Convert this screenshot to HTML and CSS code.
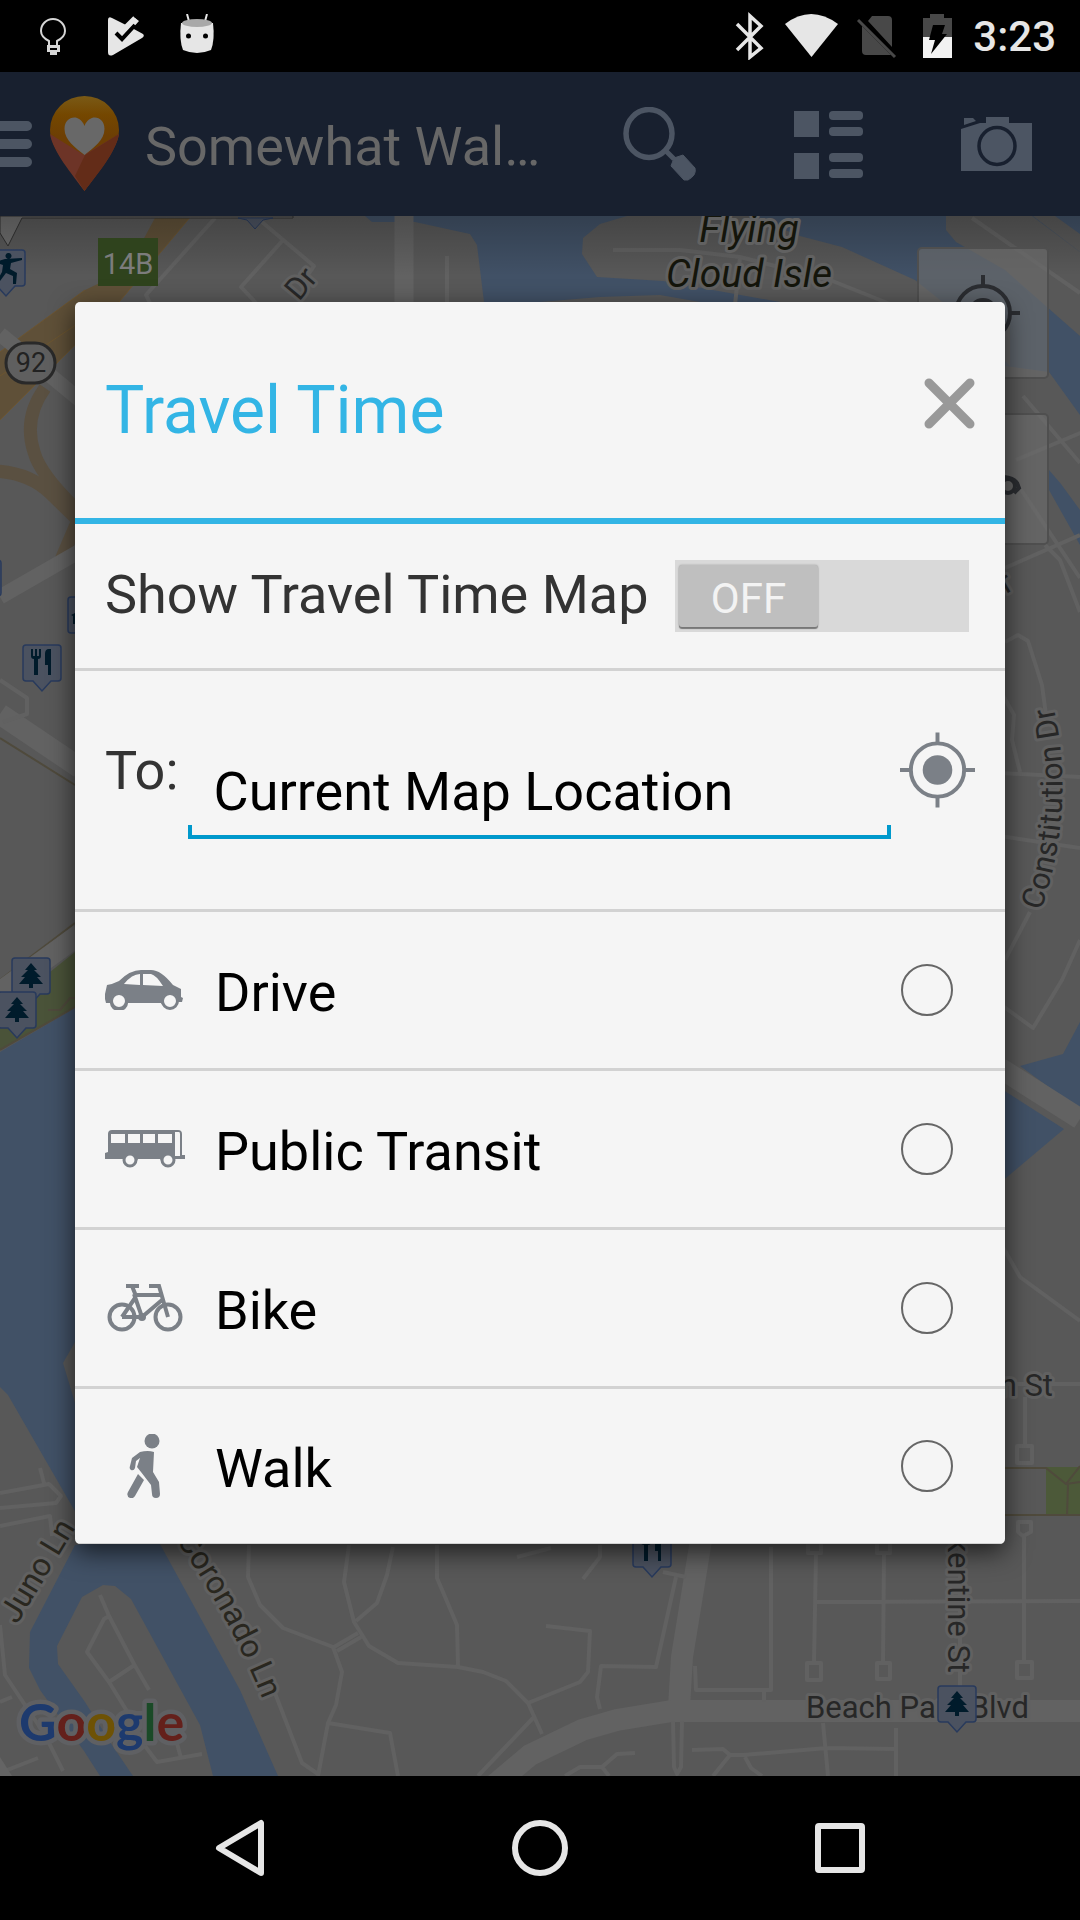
FILE: index.html
```html
<!DOCTYPE html>
<html lang="en">
<head>
<meta charset="utf-8">
<meta name="viewport" content="width=device-width, initial-scale=1">
<title>Travel Time</title>
<link rel="stylesheet" href="styles.css">
</head>
<body>
<header class="status">
  <div class="status-group status-left">
    <svg width="42" height="44" viewBox="32 14 42 44" aria-hidden="true"><path d="M49 45v-5c-6-3-8-6-8-10a12 12 0 0 1 24 0c0 4-2 7-8 10v5z" transform="translate(0 1)" fill="none" stroke="#d6d6d6" stroke-width="2"/><path d="M47 45h13v7h-3v3h-7v-3h-3zM50 48v2h7v-2z" fill="#d6d6d6" fill-rule="evenodd"/></svg>
    <svg width="42" height="44" viewBox="105 14 42 44" aria-hidden="true"><path d="M109 20q0-4 4-2l16 8 7-8 4 3-17 19-7-7 2-2 5 4 10-7 11 6q2 2-1 4l-29 17q-5 2-5-3z" fill="#e6e6e6"/><path d="M117 33l6 6 13-14" fill="none" stroke="#000" stroke-width="4"/><path d="M126 28l10-10" stroke="#e6e6e6" stroke-width="5"/></svg>
    <svg width="42" height="44" viewBox="177 14 42 44" aria-hidden="true"><path d="M188 14l3 11M208 14l-3 11" stroke="#e6e6e6" stroke-width="2"/><path d="M182 23q-2 17 2 27 14 6 28 0 4-10 2-27z" fill="#e6e6e6"/><ellipse cx="198" cy="23" rx="15" ry="4" fill="#a9a9a9"/><circle cx="189.500" cy="36" r="2.500" fill="#000"/><circle cx="206.500" cy="36" r="2.500" fill="#000"/></svg>
  </div>
  <div class="status-group">
    <svg width="220" height="48" viewBox="735 12 220 48" aria-hidden="true"><path d="M737 24l24 24-11 9V16l11 10-24 24" fill="none" stroke="#e6e6e6" stroke-width="3.500"/><path d="M785 24q26-20 53 0l-26.500 33z" fill="#e6e6e6"/><path d="M868 21l4-5h16q4 0 4 4v27zM862 26l29 29h-25q-4 0-4-4z" fill="#484848"/><path d="M858 20l37 37" stroke="#484848" stroke-width="3"/><path d="M923 37V18h7v-4h14v4h8v19z" fill="#484848"/><path d="M923 37h29v21h-29z" fill="#f2f2f2"/><path d="M933 25h12l-3 9h5l-16 20 4-14h-6z" fill="#000"/></svg>
    <time class="clock">3:23</time>
  </div>
</header>

<div class="stage">
  <header class="appbar">
    <button class="icon-button" type="button" aria-label="Menu"><svg width="32" height="46" viewBox="0 121 32 46"><path d="M0 126h27M0 144h27M0 162h27" stroke="#4c5563" stroke-width="10" stroke-linecap="round"/></svg></button>
    <svg class="brand" width="70" height="96" viewBox="50 96 70 96" aria-hidden="true">
      <defs><linearGradient id="pin" x1="0" y1="0" x2="0" y2="1"><stop offset="0" stop-color="#7a5a16"/><stop offset=".2" stop-color="#744700"/><stop offset=".42" stop-color="#6d3f04"/></linearGradient></defs>
      <path d="M84.500 191C72 172 50 148 50 130a34.500 34 0 0 1 69 0c0 18-22 42-34.500 61z" fill="url(#pin)"/>
      <path d="M50 134l34 21 35-21c-3 18-22 40-34.500 57C72 174 53 152 50 134z" fill="#6d3427"/><path d="M119 134l-34 21-10 21 9.500 15c13-17 31-38 34.500-57z" fill="#632c18"/>
      <path d="M84.500 155c-9-7-20-15-20-26 0-13 15-16 20-3 5-13 20-10 20 3 0 11-11 19-20 26z" fill="#686868"/>
    </svg>
    <h1 class="title">Somewhat Wal…</h1>
    <button class="action" type="button" aria-label="Search"><svg width="74" height="74" viewBox="624 107 74 74"><ellipse cx="650" cy="133.500" rx="23" ry="24" fill="none" stroke="#4c5563" stroke-width="5.500"/><path d="M667 151l8 8" stroke="#4c5563" stroke-width="5"/><path d="M675 158l9-3 12 13q2 7-7 12h-4l-13-14z" fill="#4c5563" stroke="#4c5563" stroke-linejoin="round"/></svg></button>
    <button class="action" type="button" aria-label="List view"><svg width="72" height="72" viewBox="792 108 72 72" fill="#4c5563"><path d="M794 111h25v26h-25zM794 153h25v26h-25z"/><rect x="829" y="111" width="34" height="9" rx="4"/><rect x="829" y="127" width="34" height="9" rx="4"/><rect x="829" y="153" width="34" height="9" rx="4"/><rect x="829" y="169" width="34" height="9" rx="4"/></svg></button>
    <button class="action" type="button" aria-label="Camera"><svg width="72" height="72" viewBox="960 108 72 72"><path d="M961 129l19-6h6v-6h23v6h23v48h-71zM964 125v-7h9l3 3z" fill="#4c5563"/><ellipse cx="997" cy="146" rx="18" ry="18.500" fill="#4c5563" stroke="#18202f" stroke-width="3.500"/></svg></button>
  </header>

  <main class="map">
    <svg class="map-art" viewBox="0 216 1080 1560" preserveAspectRatio="xMidYMid slice" role="img" aria-label="Map">
      <defs>
        <linearGradient id="edge" x1="0" y1="0" x2="0" y2="1"><stop offset="0" stop-opacity=".22"/><stop offset="1" stop-opacity="0"/></linearGradient>
        <g id="marker"><path d="M-16-47h32q3 0 3 3v30q0 3-3 3h-7L0-1-9-11h-7q-3 0-3-3v-30q0-3 3-3z" fill="#4b5260" stroke="#283a5c" stroke-width="1.500"/></g>
        <path id="tree" d="M0-42l6 7h-3l7 7h-4l6 7H2v4h-4v-4h-10l6-7h-4l7-7h-3z" fill="#001b2b"/>
        <path id="fork" d="M-11-43v7q0 3 3 3v16h4v-16q3 0 3-3v-7h-2v7h-2v-7h-2v7h-2v-7zM3-17V-38q0-5 4-5h2v26H6v-10H3z" fill="#001b2b"/>
        <path id="constitution" d="M1041 911Q1078 805 1051 695"/>
        <path id="coronado" d="M176 1540Q232 1620 266 1708"/>
      </defs>
      <rect y="216" width="1080" height="1560" fill="#585858"/>
      <g fill="#415166">
        <path d="M365 216l7 6h43l55 12 7 11 8 65h520V366l44 6 31 43V252l-47-36z"/>
        <path d="M1055 216h25v18zM1049 470l12 14 19 26v35l-31-55z"/>
        <path d="M1020 1066l43-12 17-32v88zM1000 1088l64 41-64 54zM0 1052l80-47v515L8 1395l-8-8z"/>
        <path d="M75 1545l-45 87-1 36 11 22 44 61 16 25h33l-21-31-27-43-27-38-1-18 25-49 21-12 12 1 16 13 69 126 13 51h65l-38-86-85-155z"/>
      </g>
      <g fill="#585858">
        <path d="M627 216l-27 8-17 14-1 16 15 23 66 4 117 21 60 20h170v44l-50-50-45-36-73-33-42-11-50-20z"/>
        <path d="M946 216v14l10 12 49 28 75 66v-84l-48-36zM75 1342l-12 21 12 40zM540 302l60-5 60-2 40 7z"/>
      </g>
      <path d="M0 1012l75-60v55l-75 43z" fill="#4a5339"/>
      <path d="M1046 1467h34v49h-34z" fill="#4c5939"/>
      <g fill="none" stroke="#4f4a3c" stroke-width="2"><path d="M0 738l75 47M0 1050l75-43M0 980l75-57M48 1010h12l10-12h10M1000 1468h46l20 16 14-2M1000 1515h80M1068 1484l-1 32M1066 1484l14-18"/></g>
      <g fill="none" stroke="#5a5041" stroke-width="13"><path d="M45 388q-22 30-11 64 6 22 41 56M-5 471q35 2 55 22l28 27-18 42"/></g>
      <path d="M0 352l85-62 42-20 29-54h35l-72 86-44 43-75 75z" fill="#5f5038"/>
      <path d="M0 376l80-54M85 290l-85 62M0 420l75-75 44-43 72-86" fill="none" stroke="#6c5530" stroke-width="1"/>
      <g fill="none" stroke="#626262">
        <path d="M0 334l80 66M0 597l80-46" stroke-width="15"/><path d="M0 714l80 54M0 992l80-58M1000 1068l80 51" stroke-width="21"/>
        <path d="M404 216v100" stroke-width="19"/>
        <path d="M701 1540l-19 117-3 50" stroke-width="22"/>
        <path d="M485 1793l45-38 52-25 35-10 55-9h408" stroke-width="22"/>
      </g>
      <g fill="none" stroke="#616161" stroke-width="4" stroke-linejoin="round">
        <path d="M215 218l-69 77 6 12M262 222l52 44-14 20M283 240l-42 47 16 17M447 256v50"/>
        <path d="M613 250h67l60 7 90 23 60 24M740 257l-5 48M972 218l108 75M1023 396l57 67M1016 460l69-29"/>
        <path d="M1000 470l20 18 60 90M1005 568l75-33M1045 545l15 15 20 52M1005 642l13-7 10 6 14 44 4 30M1000 690l14 25-2 25 8 32M1000 773l80 4M1000 836l80 12M1005 960l25-48M1000 1004l33 24 29-48 18-40M1000 1242l20 35 60 44"/>
        <path d="M1005 1384h75M1025 1397v47M1017 1446h15v17h-15zM1018 1522h13v10l-8 4-5-4zM1024 1537v123M1017 1662h15v16h-15zM816 1555l-2 107M807 1663h14v17h-14zM808 1540v13h13v-13M884 1555l-1 107M877 1663h13v16h-13zM877 1540v13h13v-13M816 1602l264-1M960 1545v150"/>
        <path d="M249 1545l-1 32 12 28 23 23 50 19 9 25-6 33-8 18-10 53M349 1545l-5 37 10 40 15 24 29 17 60 4 25 5 23 9 22 22 14 31M393 1547l-6 28-10 28-21 18M437 1545v33l20 47 1 41M273 1688l29 75 16 11M328 1723l62 10 8 43M334 1647l24-14M337 1651l24-14M546 1626l44 5-2 41-8 10-52 21M533 1718l-55 58M517 1557l34-9"/>
        <path d="M676 1577l-20 90-55-1-4 31 3 12M663 1572l23 5M600 1545v12l-17 22M771 1547v143h-75l-1-24M673 1721l1 46 3 7 4-7 1-46M692 1750l31-1 7 6h13l84-7 69 1M896 1728v48M823 1723l5 53M730 1755l-17 21M745 1757l6 11 11 8M635 1753l-18 1-15 13h-22l-15 9M602 1767l7 9M764 1690v12"/>
        <path d="M100 1595l9 21 25 48 15 26M109 1616l-5 3-17 33 22 30 24 39M109 1682l24-16M145 1746l12 16 45-8M176 1740l5 18"/>
        <path d="M0 1508l56-5 5-7-12-12-49 9M40 1468l4 15M0 1526l50-10 2 20M0 1625l5 50 40 60 18 36M0 1773l38-15M0 1702l12-5M0 680l27 18v16l-24 8"/>
      </g>
      <path d="M0 1757l12 19H0z" fill="#646464"/>
      <path d="M0 216h293v2H22L8 246 0 233z" fill="#6c6c6c" stroke="#303030" stroke-width="1"/>
      <path d="M238 218h35l-10 2-8 9-8-9z" fill="#4b5260" stroke="#283a5c"/>
      <rect y="216" width="1080" height="60" fill="url(#edge)"/>
      <rect x="98" y="238" width="60" height="48" fill="#2f431d"/>
      <text class="map-sign" x="128" y="274">14B</text>
      <rect x="6" y="343" width="49" height="40" rx="20" fill="#5f5f5f" stroke="#292929" stroke-width="3"/>
      <text class="map-shield" x="31" y="372">92</text>
      <g class="map-label">
        <text class="isle" x="749" y="242">Flying</text><text class="isle" x="749" y="287">Cloud Isle</text>
        <text transform="translate(299 302) rotate(-50)">Dr</text>
        <text transform="translate(1006 594) rotate(-30)">r</text>
        <text><textPath href="#constitution">Constitution Dr</textPath></text>
        <text class="olive"><textPath href="#coronado">Coronado Ln</textPath></text>
        <text class="olive" transform="translate(17 1625) rotate(-59)">Juno Ln</text>
        <text class="end" x="1053" y="1396">n St</text>
        <text class="end" transform="translate(948 1673) rotate(90)">Turkentine St</text>
        <text x="806" y="1718">Beach Park Blvd</text>
      </g>
      <use href="#marker" x="6" y="297"/><path d="M9 253a3 3 0 1 1-1 0zM-5 262l10-3 17-1v2l-11 3-1 6 7 4-1 11h-3v-8l-7-3-6 8h-3l5-9 1-7z" fill="#001b2b"/>
      <use href="#marker" x="42" y="692"/><use href="#fork" x="42" y="692"/>
      <use href="#marker" x="87" y="644"/><path d="M71 615l6-3v3l-2 1v8h-2v-8z" fill="#001b2b"/>
      <use href="#marker" x="-18" y="607"/>
      <use href="#marker" x="31" y="1005"/><use href="#tree" x="31" y="1005"/>
      <use href="#marker" x="17" y="1039"/><use href="#tree" x="17" y="1039"/>
      <use href="#marker" x="652" y="1578"/><use href="#fork" x="652" y="1578"/>
      <use href="#marker" x="957" y="1733"/><use href="#tree" x="957" y="1733"/>
      <g fill="#6c6c6c" fill-opacity=".65" stroke="#4f4f4f" stroke-width="2"><rect x="918" y="248" width="130" height="130" rx="4"/><rect x="918" y="414" width="130" height="130" rx="4"/></g>
      <g fill="none" stroke="#2b2d31" stroke-width="4"><circle cx="983" cy="313" r="27"/><path d="M983 275v11M1010 313h10"/><circle cx="983" cy="313" r="13" fill="#2b2d31"/><circle cx="1008" cy="486" r="7"/><path d="M1004 477q10 1 13 6l2 5-5 5"/></g>
      <text class="google" x="19" y="1741"><tspan fill="#1d3a6e">G</tspan><tspan fill="#64201b">o</tspan><tspan fill="#6e5205">o</tspan><tspan fill="#1d3a6e">g</tspan><tspan fill="#1a4a27">l</tspan><tspan fill="#64201b">e</tspan></text>
    </svg>
  </main>

  <div class="overlay">
    <form class="dialog" role="dialog" aria-labelledby="dialog-title">
      <div class="dialog-head">
        <h2 class="dialog-title" id="dialog-title">Travel Time</h2>
        <button class="icon-button close" type="button" aria-label="Close"><svg width="51" height="51" viewBox="0 0 51 51"><path d="M5 5l41 41M46 5L5 46" stroke="#999" stroke-width="9" stroke-linecap="round"/></svg></button>
      </div>
      <div class="row toggle-row">
        <span class="toggle-label" id="toggle-label">Show Travel Time Map</span>
        <button class="switch" type="button" role="switch" aria-checked="false" aria-labelledby="toggle-label"><span class="thumb">OFF</span></button>
      </div>
      <div class="row place-row">
        <label for="place">To:</label>
        <input class="place" id="place" type="text" value="Current Map Location">
        <button class="icon-button" type="button" aria-label="Use my location"><svg width="75" height="76" viewBox="0 0 76 76"><g fill="none" stroke="#7b8087" stroke-width="4"><circle cx="38" cy="38" r="27"/><path d="M38 0v12M38 64v12M0 38h12M64 38h12"/></g><circle cx="38" cy="38" r="15" fill="#7b8087"/></svg></button>
      </div>
      <label class="row mode">
        <svg width="80" height="40" viewBox="0 0 80 40" aria-hidden="true"><path d="M0 29V24l2-9q6-1 12-4Q25 0 36 0h10q10 0 22 15l8 4v8l2 1-1 4h-4a9 8 0 0 1-17 1H23a9 8 0 0 1-18 0H1z" fill="#7b8087"/><path d="M19 14Q27 4 35 4v11zM38 4h8q5 1 12 12l-20-1z" fill="#f5f5f5"/><ellipse cx="14" cy="31" rx="8" ry="8" fill="#f5f5f5"/><ellipse cx="65" cy="31" rx="8" ry="8" fill="#f5f5f5"/><g fill="none" stroke="#7b8087" stroke-width="3"><circle cx="14" cy="31" r="7.500"/><circle cx="65" cy="31" r="7.500"/></g></svg>
        <span>Drive</span><input type="radio" name="mode">
      </label>
      <label class="row mode">
        <svg width="80" height="38" viewBox="0 0 80 38" aria-hidden="true"><path d="M3 22V4q0-4 4-4h66q4 0 4 4v21h3v4H70a8 7 0 0 1-15 0H33a8 7 0 0 1-15 0H0v-6z" fill="#7b8087"/><path d="M6 4h14v9H6zM23 4h12v9H23zM38 4h12v9H38zM53 4h14v9H53zM70 2h4q1 0 1 2v22h-5z" fill="#f5f5f5"/><circle cx="25" cy="30" r="6" fill="#f5f5f5" stroke="#7b8087" stroke-width="3"/><circle cx="63" cy="30" r="6" fill="#f5f5f5" stroke="#7b8087" stroke-width="3"/></svg>
        <span>Public Transit</span><input type="radio" name="mode">
      </label>
      <label class="row mode">
        <svg width="80" height="48" viewBox="0 0 80 48" aria-hidden="true"><g fill="none" stroke="#7b8087" stroke-width="4"><circle cx="17" cy="33" r="12.500"/><circle cx="63" cy="33" r="12.500"/><path d="M17 33h20L29 10M17 33l13-19M29 11h27M37 33l20-17M63 33L54 2H44M21 2h13M27 2l4 10"/></g><circle cx="37" cy="33" r="4" fill="#7b8087"/></svg>
        <span>Bike</span><input type="radio" name="mode">
      </label>
      <label class="row mode">
        <svg width="80" height="64" viewBox="-1 0 80 64" aria-hidden="true"><circle cx="46" cy="7" r="7.500" fill="#7b8087"/><path d="M34 18q8-2 14 0l-1 20 6 10 1 12q0 4-4 4t-4-4l-1-9-10-13-4-5 3-9-4 3-1 7q-1 3-4 2-2-1-1-4l2-8zM32 40l6 6-9 16q-2 3-5 2-4-2-2-6z" fill="#7b8087"/></svg>
        <span>Walk</span><input type="radio" name="mode">
      </label>
    </form>
  </div>
</div>

<nav class="navbar" aria-label="System">
  <button class="nav-button" type="button" aria-label="Back"><svg width="60" height="60" viewBox="0 0 60 60"><path d="M51 5v50L9 30z" fill="none" stroke="#e6e6e6" stroke-width="6" stroke-linejoin="round"/></svg></button>
  <button class="nav-button" type="button" aria-label="Home"><svg width="60" height="60" viewBox="0 0 60 60"><circle cx="30" cy="30" r="25" fill="none" stroke="#e6e6e6" stroke-width="6"/></svg></button>
  <button class="nav-button" type="button" aria-label="Recent apps"><svg width="60" height="60" viewBox="0 0 60 60"><rect x="8" y="8" width="44" height="44" rx="1" fill="none" stroke="#e6e6e6" stroke-width="6" stroke-linejoin="round"/></svg></button>
</nav>
</body>
</html>
```
FILE: styles.css
```css
* {
  box-sizing: border-box;
}

body {
  margin: 0;
  min-height: 100vh;
  display: flex;
  flex-direction: column;
  background: #000;
  font-family: Roboto, "Noto Sans", sans-serif;
}

svg {
  display: block;
  flex: none;
}

button {
  padding: 0;
  border: 0;
  background: none;
  font: inherit;
  cursor: pointer;
}

.status {
  height: 72px;
  padding: 0 24px 0 32px;
  display: flex;
  align-items: center;
  justify-content: space-between;
}

.status-group {
  display: flex;
  align-items: center;
  gap: 18px;
}

.status-left {
  gap: 30px;
}

.clock {
  color: #e6e6e6;
  font-size: 42px;
  font-weight: 500;
}

.stage {
  position: relative;
  flex: 1;
  display: flex;
  flex-direction: column;
}

.appbar {
  height: 144px;
  display: flex;
  align-items: center;
  background: #18202f;
}

.brand {
  margin-left: 18px;
}

.title {
  flex: 1;
  min-width: 0;
  margin: 0;
  padding: 4px 0 0 25px;
  overflow: hidden;
  color: #676767;
  font-size: 54px;
  font-weight: 400;
  white-space: nowrap;
}

.icon-button {
  flex: none;
}

.action {
  width: 168px;
  height: 144px;
  display: grid;
  place-items: center;
}

.map {
  flex: 1;
  display: grid;
  overflow: hidden;
  background: #585858;
}

.map-art {
  width: 100%;
  height: 100%;
}

.map-label {
  fill: #272727;
  stroke: #616161;
  stroke-width: 6px;
  stroke-linejoin: round;
  paint-order: stroke;
  font-size: 31px;
}

.olive {
  fill: #29271f;
  font-size: 32px;
}

.isle {
  fill: #14150b;
  font-size: 39px;
  font-style: italic;
  text-anchor: middle;
}

.end {
  text-anchor: end;
}

.map-sign {
  fill: #7c7c7c;
  font-size: 29px;
  text-anchor: middle;
}

.map-shield {
  fill: #222;
  font-size: 27px;
  text-anchor: middle;
}

.google {
  font-family: Lato, sans-serif;
  font-size: 52px;
  font-weight: 700;
  stroke: #5f6063;
  stroke-width: 9px;
  stroke-linejoin: round;
  paint-order: stroke;
}

.overlay {
  position: absolute;
  inset: 0;
  padding: 0 75px 2px;
  display: grid;
  align-items: center;
}

.dialog {
  overflow: hidden;
  border-radius: 5px;
  background: #f5f5f5;
  box-shadow: 0 8px 26px rgba(0, 0, 0, 0.65);
  color: #333;
  font-size: 54px;
}

.dialog-head {
  height: 222px;
  padding: 0 30px;
  display: flex;
  align-items: center;
  justify-content: space-between;
  border-bottom: 6px solid #33b5e5;
}

.dialog-title {
  margin: 0;
  color: #33b5e5;
  font-size: 66px;
  font-weight: 400;
}

.close {
  margin-bottom: 14px;
}

.row {
  height: 159px;
  padding: 0 30px;
  display: flex;
  align-items: center;
  border-bottom: 3px solid #d2d2d2;
}

.row:last-child {
  height: 155px;
  border-bottom-width: 1px;
}

.toggle-row {
  height: 147px;
  padding-right: 36px;
  justify-content: space-between;
}

.toggle-label {
  padding-bottom: 4px;
}

.switch {
  width: 294px;
  height: 72px;
  padding: 5px 4px;
  background: #d9d9d9;
}

.thumb {
  width: 139px;
  height: 62px;
  padding-top: 4px;
  display: grid;
  place-items: center;
  border-radius: 3px;
  background: #bfbfbf;
  box-shadow: 0 2px 1px #777, 0 0 2px #999;
  color: #f3f3f3;
  font-size: 42px;
}

.place-row {
  height: 241px;
  padding-bottom: 40px;
  gap: 9px;
}

.place {
  flex: 1;
  min-width: 0;
  height: 96px;
  margin-top: 42px;
  padding: 0 26px;
  border: 0;
  outline: 0;
  background:
    linear-gradient(#0099cc, #0099cc) bottom / 100% 4px no-repeat,
    linear-gradient(#0099cc, #0099cc) left bottom / 4px 14px no-repeat,
    linear-gradient(#0099cc, #0099cc) right bottom / 4px 14px no-repeat;
  color: #000;
  font: inherit;
}

.mode {
  padding-right: 52px;
  gap: 30px;
  color: #000;
}

.mode span {
  flex: 1;
  padding-top: 4px;
}

.mode input {
  appearance: none;
  width: 52px;
  height: 52px;
  margin: 0;
  border: 2px solid #666;
  border-radius: 50%;
}

.mode input:checked {
  background: radial-gradient(#33b5e5 45%, transparent 50%);
}

.navbar {
  height: 144px;
  display: flex;
  align-items: center;
  justify-content: center;
  gap: 132px;
}

.nav-button {
  width: 168px;
  height: 144px;
  display: grid;
  place-items: center;
}
```
